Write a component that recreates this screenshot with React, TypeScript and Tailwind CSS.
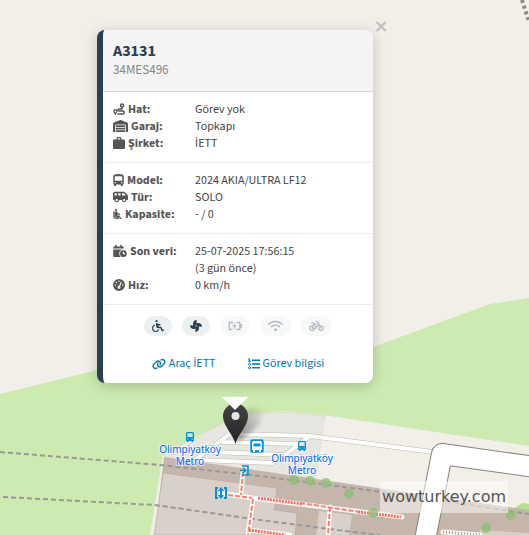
import { createElement, type ReactNode } from "react";
import type { IconType } from "react-icons";
import {
  FaWarehouse,
  FaBusSimple,
  FaVanShuttle,
  FaGaugeHigh,
  FaWheelchair,
  FaFan,
  FaWifi,
  FaBicycle,
  FaLink,
} from "react-icons/fa6";

function RouteIcon({ className }: { className?: string }) {
  return (
    <svg viewBox="0 0 24 24" className={className} fill="none" stroke="currentColor" strokeWidth="3" aria-hidden="true">
      <circle cx="18" cy="5" r="3" />
      <path d="M18 8v4H12c-3 0-3 4 0 4h8c3 0 3 6 0 6H9" strokeLinejoin="round" />
      <path d="M4.500 22 2 17.500a3 3 0 1 1 5.500 0z" strokeWidth="2.600" />
    </svg>
  );
}

function CaseIcon({ className }: { className?: string }) {
  return (
    <svg viewBox="0 0 24 24" className={className} fill="currentColor" aria-hidden="true">
      <path d="M7 5V3a3 3 0 0 1 3-3h4a3 3 0 0 1 3 3v2h5a2 2 0 0 1 2 2v15a2 2 0 0 1-2 2H2a2 2 0 0 1-2-2V7a2 2 0 0 1 2-2zm2.500 0h5V2.500h-5z" />
    </svg>
  );
}

function SeatIcon({ className }: { className?: string }) {
  return (
    <svg viewBox="3 1 18 21" className={className} fill="currentColor" stroke="currentColor" strokeWidth="0.8" aria-hidden="true">
      <path d="M7.590 5.410c-.78-.78-.78-2.050 0-2.830s2.050-.78 2.830 0 .78 2.050 0 2.830c-.79.79-2.050.79-2.830 0zM6 16V7H4v9c0 2.760 2.240 5 5 5h6v-2H9c-1.660 0-3-1.340-3-3zm14 4.070L14.930 15H11.500v-3.680c1.400 1.150 3.600 2.160 5.500 2.160v-2.160c-1.660.02-3.610-.87-4.670-2.040l-1.400-1.550c-.19-.21-.43-.38-.69-.5-.29-.14-.62-.23-.96-.23h-.03C8.010 7 7 8.010 7 9.250V15c0 1.660 1.340 3 3 3h5.070l3.500 3.500L20 20.070z" />
    </svg>
  );
}

function CalendarClockIcon({ className }: { className?: string }) {
  return (
    <svg viewBox="0 0 576 512" className={className} fill="currentColor" aria-hidden="true">
      <path d="M80 0h70v60h148V0h70v60h32c26 0 48 22 48 48v40H0v-40c0-26 22-48 48-48h32z" />
      <path d="M0 192h400c-80 10-144 80-144 176 0 60 28 112 72 144H48c-26 0-48-22-48-48z" />
      <path
        fillRule="evenodd"
        d="M432 224a144 144 0 1 1 0 288 144 144 0 0 1 0-288zm-24 60v106h92v-44h-44v-62z"
      />
    </svg>
  );
}

function BatteryIcon({ className }: { className?: string }) {
  return (
    <svg viewBox="0 0 32 22" className={className} fill="none" stroke="currentColor" strokeWidth="3" aria-hidden="true">
      <path d="M12 3H3v16h7M20 3h7v16h-9M27 8h4v6h-4" />
      <path d="m17 3-7 9h5l-2 7 7-9h-5z" fill="currentColor" strokeWidth="0.500" />
    </svg>
  );
}

function ListIcon({ className }: { className?: string }) {
  return (
    <svg viewBox="0 0 24 22" className={className} fill="none" stroke="currentColor" strokeWidth="2.600" aria-hidden="true">
      <path d="M8 3.500h16M8 11h16M8 18.500h16" />
      <path d="M0 1h3v5M0 5.500h6" strokeWidth="2" />
      <circle cx="3" cy="11.500" r="2" strokeWidth="2" />
      <circle cx="3" cy="18.500" r="2" strokeWidth="2" />
    </svg>
  );
}

type Icon = IconType | typeof RouteIcon;

interface Row {
  icon: Icon;
  iconClass: string;
  label: string;
  value: ReactNode;
}

const sections: Row[][] = [
  [
    { icon: RouteIcon, iconClass: "w-3 h-3", label: "Hat:", value: "Görev yok" },
    { icon: FaWarehouse, iconClass: "w-[15px] h-3", label: "Garaj:", value: "Topkapı" },
    { icon: CaseIcon, iconClass: "w-3 h-3", label: "Şirket:", value: "İETT" },
  ],
  [
    { icon: FaBusSimple, iconClass: "w-[11px] h-3", label: "Model:", value: "2024 AKIA/ULTRA LF12" },
    { icon: FaVanShuttle, iconClass: "w-[15px] h-3", label: "Tür:", value: "SOLO" },
    { icon: SeatIcon, iconClass: "w-[9px] h-3", label: "Kapasite:", value: "- / 0" },
  ],
  [
    {
      icon: CalendarClockIcon,
      iconClass: "w-[14px] h-3",
      label: "Son veri:",
      value: (
        <>
          25-07-2025 17:56:15
          <br />
          (3 gün önce)
        </>
      ),
    },
    { icon: FaGaugeHigh, iconClass: "w-3 h-3", label: "Hız:", value: "0 km/h" },
  ],
];

const features: { icon: Icon; title: string; active: boolean; iconClass: string }[] = [
  { icon: FaWheelchair, title: "Wheelchair", active: true, iconClass: "w-3 h-3" },
  { icon: FaFan, title: "Fan", active: true, iconClass: "w-3 h-3" },
  { icon: BatteryIcon, title: "Charging", active: false, iconClass: "w-[14px] h-3" },
  { icon: FaWifi, title: "Wi-Fi", active: false, iconClass: "w-[15px] h-3" },
  { icon: FaBicycle, title: "Bicycle", active: false, iconClass: "w-[15px] h-3" },
];

const trees = [
  [294, 480], [310, 481], [326, 483], [349, 494], [373, 513], [511, 515], [486, 528],
];

function BusStop({ x, y }: { x: number; y: number }) {
  return (
    <path
      transform={`translate(${x} ${y})`}
      fill="#0092da"
      fillRule="evenodd"
      d="M1 0h6l1 1v8H7v1H5.500V9h-3v1H1V9H0V1zm.3 1.300v3.700h5.400V1.300zM1.300 6.500v1h1v-1zm4.400 0v1h1v-1z"
    />
  );
}

function MapLabel({ x, y }: { x: number; y: number }) {
  return (
    <text
      x={x}
      y={y}
      textAnchor="middle"
      className="font-['Noto_Sans',sans-serif] text-[10px]"
      fill="#0066ff"
      stroke="#ffffff"
      strokeOpacity="0.6"
      strokeWidth="2"
      paintOrder="stroke"
    >
      <tspan x={x}>Olimpiyatköy</tspan>
      <tspan x={x} dy="12">Metro</tspan>
    </text>
  );
}

function MapCanvas() {
  return (
    <svg viewBox="0 0 529 535" preserveAspectRatio="xMidYMin slice" className="absolute inset-0 h-full w-full">
      <defs>
        <linearGradient id="pin" x1="0" y1="0" x2="0" y2="1">
          <stop offset="0" stopColor="#444" />
          <stop offset="1" stopColor="#222" />
        </linearGradient>
        <linearGradient id="shade" x1="0" y1="1" x2="1" y2="0">
          <stop offset="0" stopColor="#000" stopOpacity="0.45" />
          <stop offset="1" stopColor="#000" stopOpacity="0" />
        </linearGradient>
        <filter id="soft" x="-50%" y="-50%" width="200%" height="200%">
          <feGaussianBlur stdDeviation="2" />
        </filter>
      </defs>

      <rect width="529" height="535" fill="#f2efe9" />
      <path d="M522 0l7 22" stroke="#8a8a8a" strokeWidth="4" strokeDasharray="3 3" />

      {/* grass */}
      <path d="M0 394 97 370 373 347 490 304 529 298V446L330 416 282 411 240 415 205 432 165 455 150 535H0z" fill="#cdebb0" />
      <path d="M163 455 150 535H156L166 458z" fill="#f2efe9" />

      {/* bus station */}
      <path d="M178 453 206 432 Q238 412 282 412L325 416 316 480 165 457z" fill="#e8e6e1" stroke="#d3d0ca" strokeWidth="0.6" />
      <path d="M325 417 529 446V511L316 480z" fill="#f2efe9" />
      <path d="M510 511l12-8 7 1v8z" fill="#b5e08c" />

      {/* buildings */}
      <path d="M164 457 529 510V535H155z" fill="#c4b6ab" />
      <path d="M163 473 277 488 274 510 297 513 295 535H154z" fill="#d9d0c9" stroke="#b9a99c" strokeWidth="0.6" />
      <path d="M319 511 352 515 349 535H316zM480 530 529 533V535H480z" fill="#d9d0c9" />

      {/* roads */}
      <g fill="none" stroke="#bdbab5" strokeWidth="5">
        <path d="M196 459 230 434 310 436 433 452M212 452 285 455 310 436M222 442 298 444M198 460 273 463 288 453" />
      </g>
      <g fill="none" stroke="#ffffff" strokeWidth="4">
        <path d="M196 459 230 434 310 436 433 452M212 452 285 455 310 436M222 442 298 444M198 460 273 463 288 453" />
      </g>
      <path d="M425 540 442 454 535 467" fill="none" stroke="#86837e" strokeWidth="22" strokeLinejoin="round" />
      <path d="M425 540 442 454 535 467" fill="none" stroke="#ffffff" strokeWidth="20" strokeLinejoin="round" />

      {/* tunnels */}
      <g fill="none" stroke="#999999" strokeWidth="2" strokeDasharray="5 3">
        <path d="M0 452 160 465 260 476 390 493 414 496M446 501 529 514" />
        <path d="M3 497 155 505 260 520 345 531 380 535" />
      </g>

      {/* footways */}
      <g fill="none" stroke="#fbf7f4" strokeWidth="5" strokeLinecap="round">
        <path d="M221 493 252 498 402 517M243 472 241 495M253 499 248 535M330 507 328 535M248 530 290 535M443 532 480 535" />
      </g>
      <g fill="none" stroke="#fa8072" strokeWidth="2" strokeDasharray="5 2">
        <path d="M228 495 252 498M243 472 241 495M253 499 248 535M330 507 328 535M300 503 360 512" />
      </g>
      <g fill="none" stroke="#fa6f66" strokeWidth="3" strokeDasharray="2 1">
        <path d="M258 498 302 504M358 512 401 517M249 530 285 535" />
      </g>
      <path d="M443 532 480 535" stroke="#a8a09a" strokeWidth="3" strokeDasharray="1 2" />

      {trees.map(([x, y]) => (
        <circle key={`${x}-${y}`} cx={x} cy={y} r="5" fill="#8fbf76" opacity="0.8" />
      ))}

      <BusStop x={186} y={432} />
      <BusStop x={298} y={441} />
      <rect x="250" y="439" width="14" height="14" rx="2" fill="#0092da" stroke="#fff" strokeWidth="0.5" />
      <path d="M253 441h8l1 2v7h-1v2h-2v-2h-4v2h-2v-2h-1v-7z" fill="#fff" />
      <path d="M253.500 443.500h7v3h-7z" fill="#0092da" />
      <path d="M242 466h6v9h-6M240 470.500h5M243 468l2.500 2.500L243 473" fill="none" stroke="#0092da" strokeWidth="1.500" />
      <path d="M218 488h-2v10h2M224 488h2v10h-2" fill="none" stroke="#0092da" strokeWidth="2" />
      <path d="m221 487 3 4h-2v4h2l-3 4-3-4h2v-4h-2z" fill="#0092da" />

      <MapLabel x={190} y={453} />
      <MapLabel x={302} y={462} />

      {/* vehicle pin and its shadow */}
      <path d="M236 443 244 412Q252 404 262 408 266 418 254 430z" fill="url(#shade)" filter="url(#soft)" />
      <path d="M235.500 444C233 434 223 426 223 416a12.500 12.500 0 0 1 25 0c0 10-10 18-12.500 28z" fill="url(#pin)" />
      <circle cx="235.500" cy="416" r="4" fill="#e5e5e5" />
    </svg>
  );
}

export default function App() {
  return (
    <main className="relative min-h-screen overflow-hidden bg-[#f2efe9] font-['Source_Sans_3','Noto_Sans_CJK_SC','Noto_Sans',sans-serif]">
      <MapCanvas />

      <div className="absolute bottom-[22px] right-[21px] bg-white/50 px-0.5 py-1 font-['DejaVu_Sans',sans-serif] text-base leading-6 text-[#555]">
        wowturkey.com
      </div>

      {/* popup */}
      <section className="absolute left-[97px] top-[30px] w-[276px]">
        <button type="button" aria-label="Kapat" className="absolute -right-4 -top-4 h-6 w-4 text-center font-['DejaVu_Sans',sans-serif] text-lg font-bold leading-6 text-[#bfbfbf]">
          ×
        </button>
        <article className="overflow-hidden rounded-lg border-l-[6px] border-[#2c3e50] bg-white text-xs leading-[17px] text-[#444] shadow-[0_3px_14px_rgba(0,0,0,0.2)]">
          <header className="border-b border-[#d9d9d9] bg-[#f4f4f4] px-2.5 pb-3 pt-2.5">
            <h1 className="text-base font-bold leading-[22px] text-[#2c3e50]">A3131</h1>
            <p className="text-[13px] leading-[17px] text-[#888]">34MES496</p>
          </header>

          {sections.map((rows, i) => (
            <dl key={i} className="border-b border-[#ececec] px-2.5 pb-2.5 pt-[9px]">
              {rows.map((row) => (
                <div key={row.label} className="flex">
                  <dt className="flex w-[82px] items-start gap-[3px] font-bold text-[#555]">
                    {createElement(row.icon, { className: `mt-[2px] shrink-0 ${row.iconClass}` })}
                    {row.label}
                  </dt>
                  <dd>{row.value}</dd>
                </div>
              ))}
            </dl>
          ))}

          <ul className="flex justify-center gap-2.5 pt-[11px]">
            {features.map((f) => (
              <li
                key={f.title}
                aria-label={f.title}
                className={`flex h-5 items-center rounded-full px-2 ${
                  f.active ? "bg-[#ecf0f1] text-[#2c3e50]" : "bg-[#f7f9f9] text-[#b3b8c2]"
                }`}
              >
                {createElement(f.icon, { className: f.iconClass })}
              </li>
            ))}
          </ul>

          <nav className="flex justify-center gap-8 pb-[11px] pt-[19px] text-[#0078a8]">
            <a href="#arac" className="flex items-center gap-[3px]">
              <FaLink className="h-3 w-[14px]" />
              Araç İETT
            </a>
            <a href="#gorev" className="flex items-center gap-[3px]">
              <ListIcon className="h-3 w-3" />
              Görev bilgisi
            </a>
          </nav>
        </article>
        <div className="absolute left-1/2 top-full mt-[14px] h-[13px] w-[26px] -translate-x-1/2 bg-white [clip-path:polygon(0_0,100%_0,50%_100%)]" />
      </section>
    </main>
  );
}
